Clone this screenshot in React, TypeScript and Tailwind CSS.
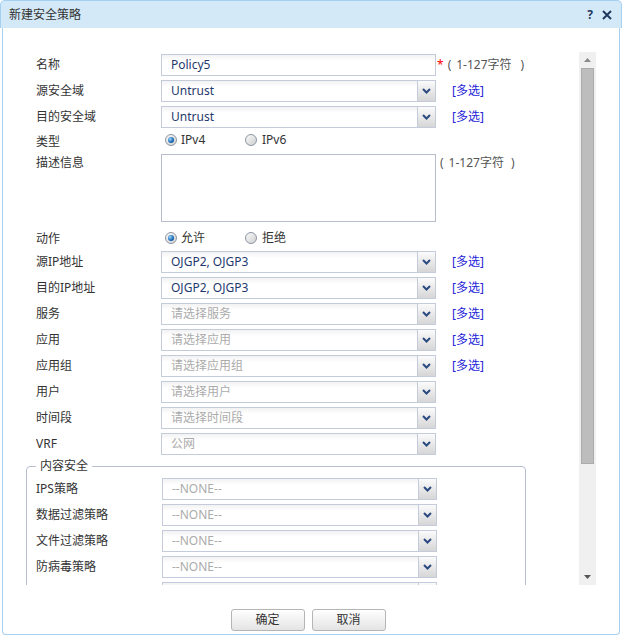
import React from "react";

const Chevron = () => (
  <svg width="9" height="6" viewBox="0 0 9 6">
    <path d="M1 1 L4.5 4.5 L8 1" fill="none" stroke="#2b4a80" strokeWidth="2" />
  </svg>
);

function Select({ value, muted }: { value: string; muted?: boolean }) {
  return (
    <div className="flex h-[22px] w-[275px] border border-[#c4cbdb] bg-white">
      <div
        className={
          muted
            ? "flex-1 pl-[9px] leading-[20px] text-[#ababab] bg-gradient-to-b from-[#f2f2f2] to-white to-[30%]"
            : "flex-1 pl-[9px] leading-[20px] text-[#1f3a6e] bg-gradient-to-b from-[#f2f2f2] to-white to-[30%]"
        }
      >
        {value}
      </div>
      <div className="flex w-[18px] items-center justify-center border-l border-[#c4cbdb] bg-gradient-to-b from-[#fbfbfb] to-[#d6d6d6]">
        <Chevron />
      </div>
    </div>
  );
}

function Radio({ checked }: { checked?: boolean }) {
  return (
    <span className="flex h-[12px] w-[12px] items-center justify-center rounded-full border border-[#8c96a3] bg-gradient-to-br from-[#fafafa] to-[#cfcfcf]">
      {checked && (
        <span className="h-[6px] w-[6px] rounded-full bg-[radial-gradient(circle_at_35%_35%,#9ad6ff,#1665b0_60%,#0c3d73)]" />
      )}
    </span>
  );
}

const Multi = () => <span className="ml-[16px] text-[#2424d8]">[多选]</span>;

function Row({
  label,
  children,
  className,
  labelWidth,
}: {
  label: string;
  children: React.ReactNode;
  className?: string;
  labelWidth?: string;
}) {
  return (
    <div className={"flex h-[22px] items-center " + (className ?? "mt-[4px]")}>
      <div className={labelWidth ?? "w-[125px]"}>{label}</div>
      {children}
    </div>
  );
}

export default function App() {
  return (
    <div className="flex h-[636px] w-[622px] flex-col bg-white text-[12px] leading-[16px] text-[#333] font-['Noto_Sans','Noto_Sans_CJK_SC',sans-serif]">
      {/* title bar */}
      <div className="flex h-[28px] items-center rounded-t-[5px] border-x border-t border-[#a6cff0] bg-[#d4e9f8] pl-[8px] pr-[9px]">
        <span className="flex-1 pt-[1px] text-[#333]">新建安全策略</span>
        <span className="mr-[9px] text-[12px] font-bold text-[#1f3a5f]">?</span>
        <svg width="10" height="10" viewBox="0 0 10 10">
          <path d="M1 1 L9 9 M9 1 L1 9" stroke="#1f3a5f" strokeWidth="2" />
        </svg>
      </div>

      {/* body */}
      <div className="mx-[2px] mb-[1px] flex flex-1 flex-col rounded-b-[4px] border-x border-b border-[#a6cff0] bg-white pl-[17px] pt-[24px]">
        <div className="flex h-[533px] w-[576px]">
          <div className="h-full w-[559px] overflow-hidden pl-[6px] pt-[2px]">
            <div className="pl-[10px]">
              <Row label="名称" className="mt-0">
                <div className="h-[22px] w-[275px] border border-[#c4cbdb] bg-gradient-to-b from-[#f2f2f2] to-white to-[30%] pl-[9px] leading-[20px] text-[#1f3a6e]">
                  Policy5
                </div>
                <span className="ml-[1px] text-[#ff0000]">*</span>
                <span className="ml-[4px] text-[#555]">(</span>
                <span className="ml-[5px] text-[#555]">1-127字符</span>
                <span className="ml-[9px] text-[#555]">)</span>
              </Row>
              <Row label="源安全域">
                <Select value="Untrust" />
                <Multi />
              </Row>
              <Row label="目的安全域">
                <Select value="Untrust" />
                <Multi />
              </Row>
              <div className="mt-[4px] flex h-[22px] items-start">
                <div className="w-[125px] pt-[1px] leading-[18px]">类型</div>
                <div className="mt-[2px] flex pl-[4px]">
                  <label className="flex h-[12px] w-[80px] items-center gap-[4px] leading-[12px]">
                    <Radio checked />
                    <span>IPv4</span>
                  </label>
                  <label className="flex h-[12px] w-[80px] items-center gap-[5px] leading-[12px]">
                    <Radio />
                    <span>IPv6</span>
                  </label>
                </div>
              </div>
              <div className="flex items-start">
                <div className="w-[125px] leading-[18px]">描述信息</div>
                <div className="h-[68px] w-[275px] border border-[#b6bccb] bg-white" />
                <span className="ml-[4px] leading-[18px] text-[#555]">(</span>
                <span className="ml-[5px] leading-[18px] text-[#555]">1-127字符</span>
                <span className="ml-[7px] leading-[18px] text-[#555]">)</span>
              </div>
              <div className="mt-[4px] flex h-[22px] items-start">
                <div className="w-[125px] pt-[4px] leading-[18px]">动作</div>
                <div className="mt-[6px] flex pl-[4px]">
                  <label className="flex h-[12px] w-[80px] items-center gap-[4px] leading-[12px]">
                    <Radio checked />
                    <span>允许</span>
                  </label>
                  <label className="flex h-[12px] w-[80px] items-center gap-[5px] leading-[12px]">
                    <Radio />
                    <span>拒绝</span>
                  </label>
                </div>
              </div>
              <Row label="源IP地址" className="mt-[3px]">
                <Select value="OJGP2, OJGP3" />
                <Multi />
              </Row>
              <Row label="目的IP地址">
                <Select value="OJGP2, OJGP3" />
                <Multi />
              </Row>
              <Row label="服务">
                <Select value="请选择服务" muted />
                <Multi />
              </Row>
              <Row label="应用">
                <Select value="请选择应用" muted />
                <Multi />
              </Row>
              <Row label="应用组">
                <Select value="请选择应用组" muted />
                <Multi />
              </Row>
              <Row label="用户">
                <Select value="请选择用户" muted />
              </Row>
              <Row label="时间段">
                <Select value="请选择时间段" muted />
              </Row>
              <Row label="VRF">
                <Select value="公网" muted />
              </Row>
            </div>

            <fieldset className="mt-[3px] w-[500px] rounded-[4px] border border-[#b7bfd1] pb-[10px] pl-[9px] pt-[4px]">
              <legend className="px-[4px] leading-[16px] text-[#333]">内容安全</legend>
              <Row label="IPS策略" className="mt-0" labelWidth="w-[126px]">
                <Select value="--NONE--" muted />
              </Row>
              <Row label="数据过滤策略" labelWidth="w-[126px]">
                <Select value="--NONE--" muted />
              </Row>
              <Row label="文件过滤策略" labelWidth="w-[126px]">
                <Select value="--NONE--" muted />
              </Row>
              <Row label="防病毒策略" labelWidth="w-[126px]">
                <Select value="--NONE--" muted />
              </Row>
              <Row label="" labelWidth="w-[126px]">
                <Select value="" muted />
              </Row>
            </fieldset>
          </div>

          {/* scrollbar */}
          <div className="flex h-full w-[17px] flex-col items-center bg-[#f0f0f0]">
            <div className="flex h-[16px] items-center justify-center">
              <svg width="7" height="4" viewBox="0 0 7 4">
                <path d="M0 4 L3.5 0 L7 4 Z" fill="#8a8a8a" />
              </svg>
            </div>
            <div className="h-[396px] w-[13px] border border-[#acacac] bg-[#bdbdbd]" />
            <div className="flex flex-1 items-end justify-center pb-[6px]">
              <svg width="7" height="4" viewBox="0 0 7 4">
                <path d="M0 0 L7 0 L3.5 4 Z" fill="#555" />
              </svg>
            </div>
          </div>
        </div>

        {/* footer */}
        <div className="mt-[24px] flex justify-center gap-[7px] pr-[23px]">
          <button className="h-[22px] w-[74px] rounded-[3px] border border-[#b5b5b5] bg-gradient-to-b from-white to-[#e4e4e4] text-[12px] leading-[20px] text-[#333]">
            确定
          </button>
          <button className="h-[22px] w-[74px] rounded-[3px] border border-[#b5b5b5] bg-gradient-to-b from-white to-[#e4e4e4] text-[12px] leading-[20px] text-[#333]">
            取消
          </button>
        </div>
      </div>
    </div>
  );
}
